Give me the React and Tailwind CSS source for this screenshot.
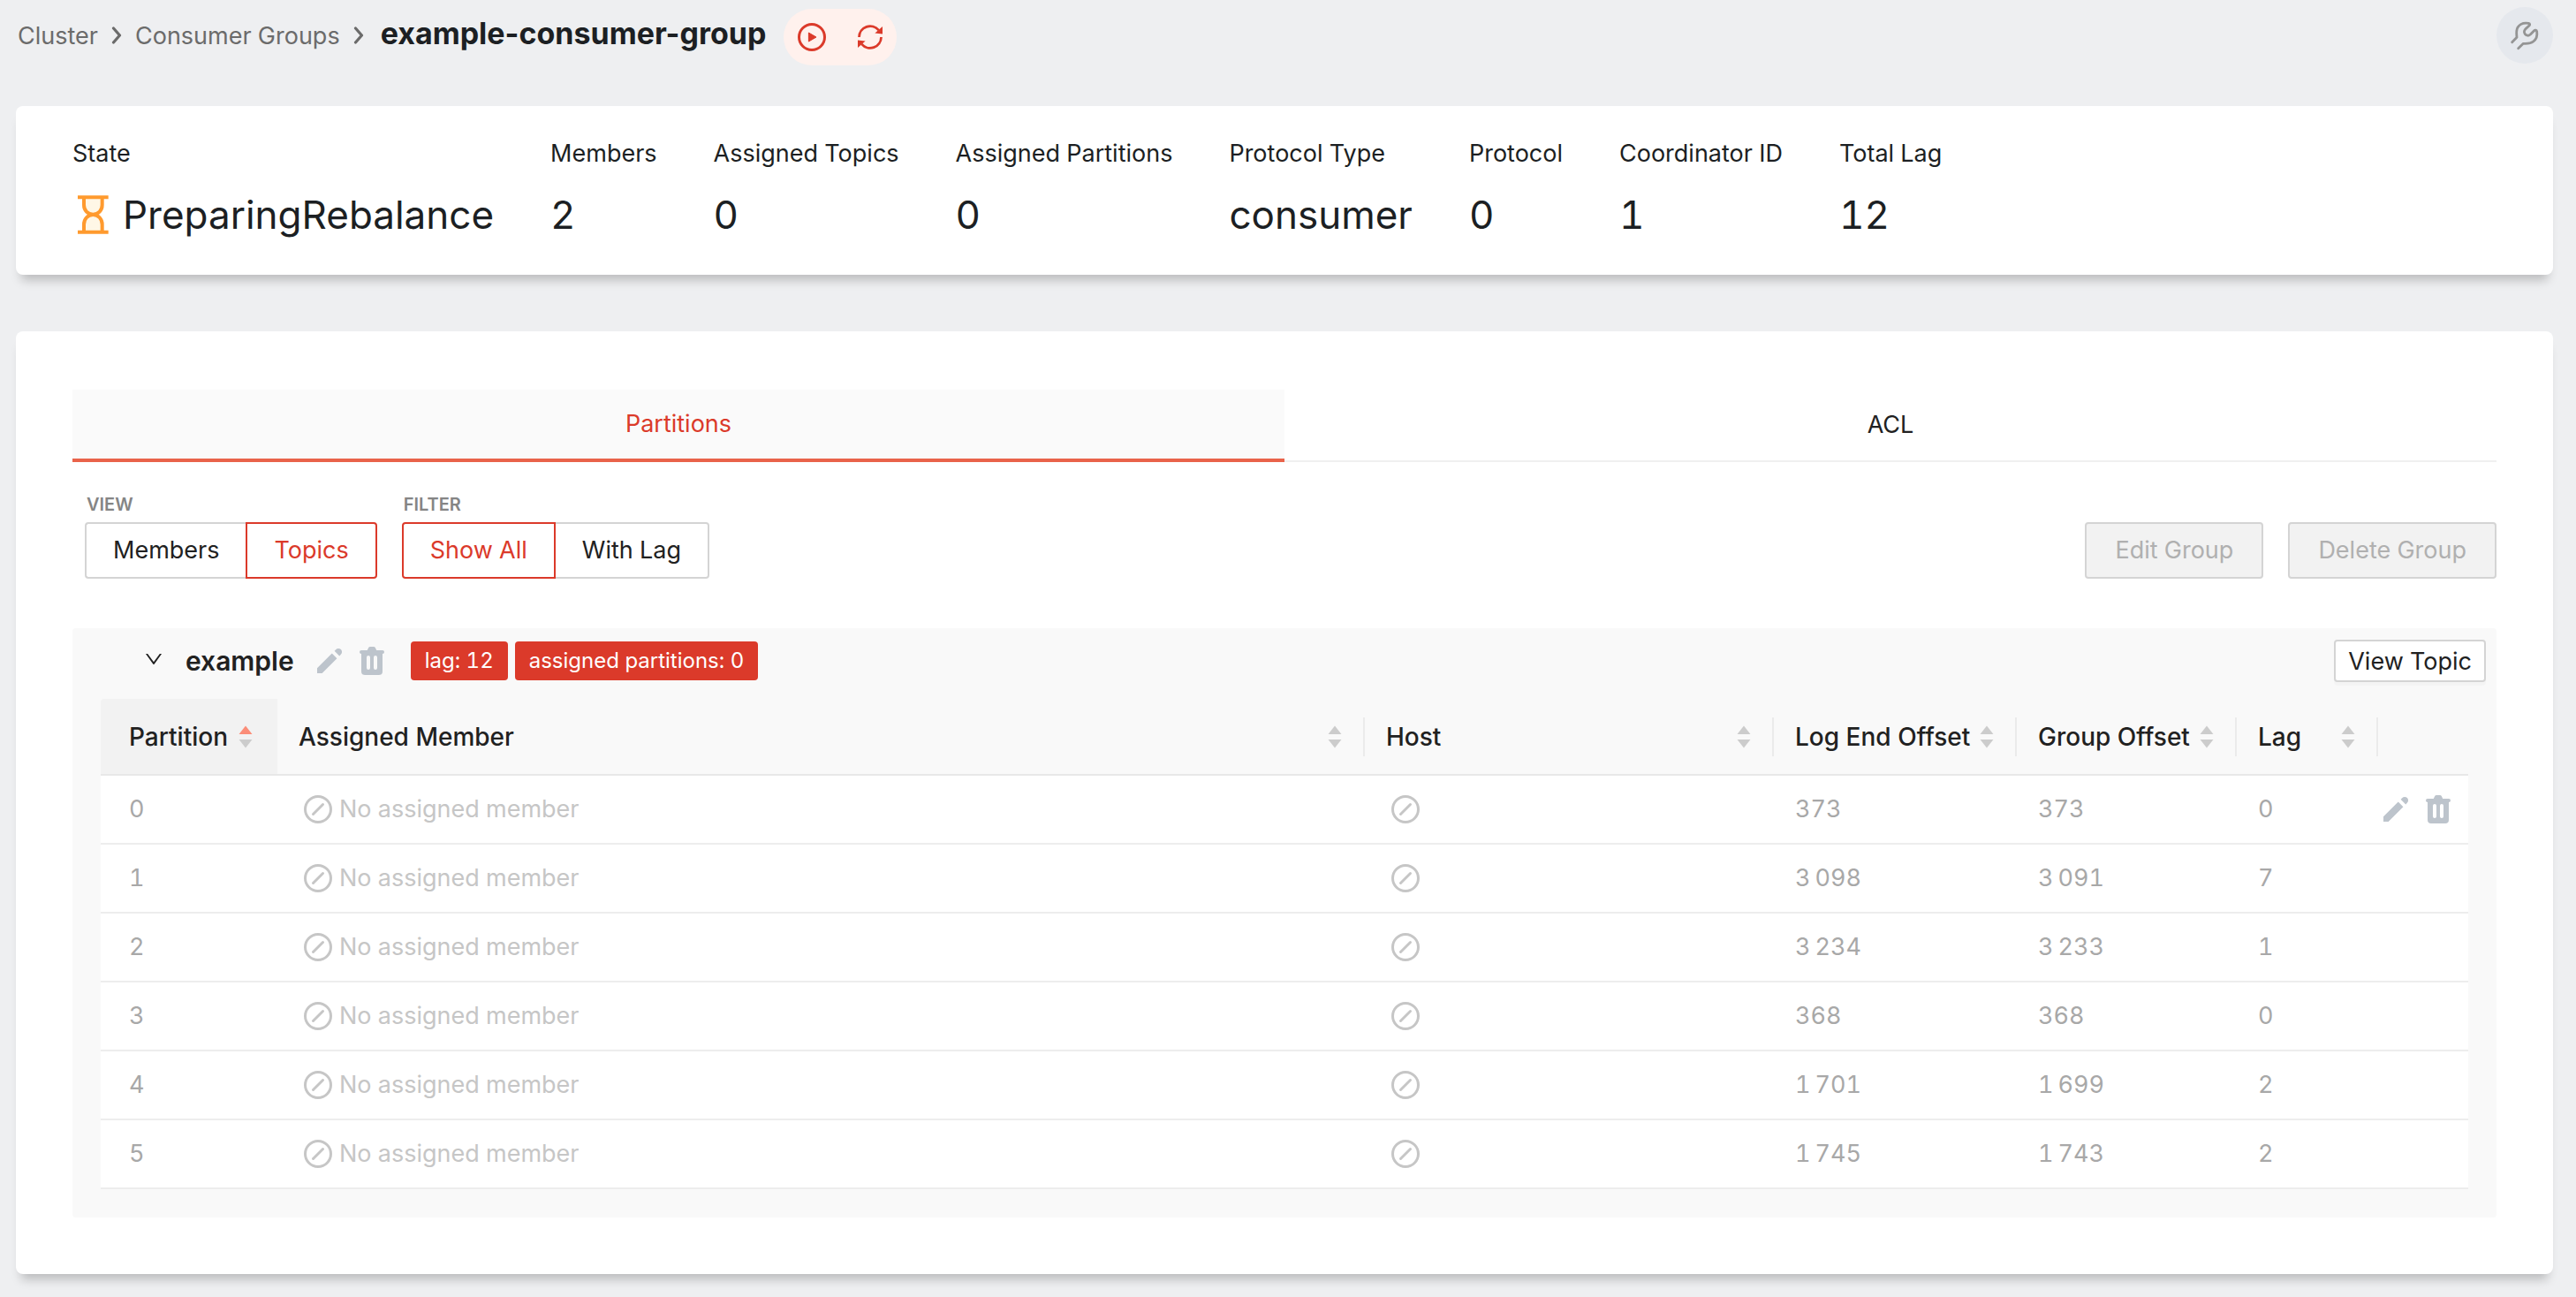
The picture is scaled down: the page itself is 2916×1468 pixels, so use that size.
import React from "react";
import { HiPencil, HiTrash } from "react-icons/hi";
import { AiOutlineDown } from "react-icons/ai";

const stats = [
  ["Members", "2"],
  ["Assigned Topics", "0"],
  ["Assigned Partitions", "0"],
  ["Protocol Type", "consumer"],
  ["Protocol", "0"],
  ["Coordinator ID", "1"],
  ["Total Lag", "12"],
];

const rows = [
  ["0", "373", "373", "0"],
  ["1", "3\u2009098", "3\u2009091", "7"],
  ["2", "3\u2009234", "3\u2009233", "1"],
  ["3", "368", "368", "0"],
  ["4", "1\u2009701", "1\u2009699", "2"],
  ["5", "1\u2009745", "1\u2009743", "2"],
];

function ChevronIcon() {
  return (
    <svg viewBox="0 0 12 20" className="mx-[15px] h-5 w-3 shrink-0" fill="none" stroke="currentColor" strokeWidth="3.2" strokeLinecap="round" strokeLinejoin="round" aria-hidden="true">
      <path d="M2.5 2 L9.5 10 L2.5 18" />
    </svg>
  );
}

function PlayIcon() {
  return (
    <svg viewBox="0 0 32 32" className="size-8" aria-hidden="true">
      <circle cx="16" cy="16" r="14.5" fill="none" stroke="currentColor" strokeWidth="3" />
      <path d="M12.4 11 V21 L21 16 Z" fill="currentColor" stroke="currentColor" strokeWidth="1" strokeLinejoin="round" />
    </svg>
  );
}

function RefreshIcon() {
  return (
    <svg viewBox="0 0 28 28" className="size-7" aria-hidden="true">
      <g fill="none" stroke="currentColor" strokeWidth="2.8">
        <path d="M1.5 14 A12.5 12.5 0 0 1 23.6 6.2" />
        <path d="M26.5 14 A12.5 12.5 0 0 1 4.4 21.8" />
      </g>
      <path d="M28 2 V10.4 L19.4 9.6 Z" fill="currentColor" />
      <path d="M0 26 V17.6 L8.6 18.4 Z" fill="currentColor" />
    </svg>
  );
}

function WrenchIcon() {
  return (
    <svg viewBox="78 66 102 102" className="size-[34px]" fill="none" stroke="currentColor" strokeWidth="8.5" strokeLinecap="round" strokeLinejoin="round" aria-hidden="true">
      <path d="M86 140 L102 124 C101 114 99 100 105 90 C113 77 129 74 142 76 C147 77 147 81 144 84 L133 94 C126 101 126 108 130 113 C135 119 142 119 148 114 L160 102 C164 98 169 99 170 104 C172 116 168 130 158 138 C149 145 137 146 124 145 L107 161" />
    </svg>
  );
}

function HourglassIcon() {
  return (
    <svg viewBox="50 54 117 138" className="mr-[14px] h-[46px] w-[39px] shrink-0" fill="none" stroke="#ff9a2e" strokeWidth="12" aria-hidden="true">
      <path d="M77 64 V90 C77 108 90 122 108 122 C126 122 139 108 139 90 V64" fill="#fff7e6" />
      <path d="M77 182 V156 C77 138 90 123 108 123 C126 123 139 138 139 156 V182" fill="#fff7e6" />
      <path d="M56 64 H160 M56 182 H160" />
    </svg>
  );
}

function SkipIcon({ label }) {
  return (
    <svg viewBox="0 0 32 32" className="size-8 shrink-0" fill="none" stroke="currentColor" strokeWidth="3" strokeLinecap="round" role={label ? "img" : undefined} aria-label={label} aria-hidden={label ? undefined : true}>
      <circle cx="16" cy="16" r="14.5" />
      <path d="M10.5 21.5 L21.5 10.5" />
    </svg>
  );
}

function Sorter({ active }) {
  return (
    <svg viewBox="0 0 16 28" className="h-7 w-4 shrink-0" aria-hidden="true">
      <path d="M8 1.5 L15.5 11 H0.5 Z" fill={active ? "#fb8d78" : "#cccccc"} />
      <path d="M8 26.5 L15.5 17 H0.5 Z" fill="#cccccc" />
    </svg>
  );
}

function Head({ title, active }) {
  return (
    <th scope="col" className={active ? "rounded-tl bg-[#f2f2f2] p-0" : "p-0"}>
      <div className={active ? "flex h-11 items-center" : "flex h-11 items-center border-r-2 border-[#ebebeb]"}>
        <button type="button" className={"flex flex-1 items-center justify-between text-left font-medium whitespace-nowrap " + (active ? "pr-7 pl-8" : "px-6")}>
          {title}
          <Sorter active={active} />
        </button>
      </div>
    </th>
  );
}

function Actions() {
  return (
    <span className="flex items-center gap-2 text-[#bdc4cc]">
      <button type="button" aria-label="Edit"><HiPencil className="size-10" /></button>
      <button type="button" aria-label="Delete"><HiTrash className="size-10" /></button>
    </span>
  );
}

export default function App() {
  return (
    <div className="min-h-screen bg-[#eeeff1] pr-[26px] pb-[26px] pl-[18px] font-['Inter',sans-serif] text-[27px] leading-[44px] text-[#212121] tabular-nums">
      <header className="flex h-[120px] items-start justify-between pt-2">
        <div className="flex items-start">
          <nav aria-label="Breadcrumb" className="mt-2 flex items-baseline text-[#6b6b6b]">
            <a href="#" className="pl-[2px]">Cluster</a>
            <ChevronIcon />
            <a href="#">Consumer Groups</a>
            <ChevronIcon />
            <h1 className="ml-1 text-[34px] font-bold text-[#1c1f23] normal-nums">example-consumer-group</h1>
          </nav>
          <div className="mt-0.5 ml-5 flex h-16 w-32 items-center justify-between rounded-full bg-[#fff1ed] px-4 text-[#db3a2a]">
            <button type="button" aria-label="Play"><PlayIcon /></button>
            <button type="button" aria-label="Refresh"><RefreshIcon /></button>
          </div>
        </div>
        <button type="button" aria-label="Debug" className="flex size-16 items-center justify-center rounded-full bg-[#e5e8ed] text-[#949494]">
          <WrenchIcon />
        </button>
      </header>

      <main className="flex flex-col gap-16">
        <section className="rounded-lg bg-white px-16 pt-8 pb-[22px] shadow-[0_12px_12px_-6px_#00000038]">
          <dl className="flex gap-16 text-[#1c1f23]">
            <div>
              <dt>State</dt>
              <dd className="flex h-[93px] items-center pl-1 text-[44px]">
                <HourglassIcon />
                PreparingRebalance
              </dd>
            </div>
            {stats.map(([label, value]) => (
              <div key={label}>
                <dt>{label}</dt>
                <dd className="flex h-[93px] items-center text-[44px]">{value}</dd>
              </div>
            ))}
          </dl>
        </section>

        <section className="rounded-lg bg-white px-16 pt-[66px] pb-16 shadow-[0_12px_12px_-6px_#00000038]">
          <div role="tablist" className="grid grid-cols-2">
            <button type="button" role="tab" aria-selected="true" className="h-[82px] border-b-4 border-[#e9634a] bg-[#fafafa] text-[#db3a2a]">Partitions</button>
            <button type="button" role="tab" aria-selected="false" className="h-[82px] border-b-2 border-[#f0f0f0]">ACL</button>
          </div>

          <div className="mt-8 flex items-end justify-between pl-[14px]">
            <div className="flex gap-7">
              <div role="group" aria-labelledby="view-label">
                <div id="view-label" className="pl-[2px] text-[20px] leading-[32px] font-semibold text-[#858585]">VIEW</div>
                <div className="mt-1 flex h-16">
                  <button type="button" className="rounded-l border-2 border-r-0 border-[#d4d4d4] px-[30px]">Members</button>
                  <button type="button" className="rounded-r border-2 border-[#db3a2a] px-[30px] text-[#db3a2a]">Topics</button>
                </div>
              </div>
              <div role="group" aria-labelledby="filter-label">
                <div id="filter-label" className="pl-[2px] text-[20px] leading-[32px] font-semibold text-[#858585]">FILTER</div>
                <div className="mt-1 flex h-16">
                  <button type="button" className="rounded-l border-2 border-[#db3a2a] px-[30px] text-[#db3a2a]">Show All</button>
                  <button type="button" className="rounded-r border-2 border-l-0 border-[#d4d4d4] px-[30px]">With Lag</button>
                </div>
              </div>
            </div>
            <div className="flex gap-7 text-[#b0b0b0]">
              <button type="button" disabled className="h-16 rounded border-2 border-[#d4d4d4] bg-[#f2f2f2] px-8">Edit Group</button>
              <button type="button" disabled className="h-16 rounded border-2 border-[#d4d4d4] bg-[#f2f2f2] px-8">Delete Group</button>
            </div>
          </div>

          <div className="mt-14 rounded bg-[#f9f9f9] pb-8">
            <div className="flex h-20 items-center pr-3 pb-1.5 pl-20">
              <button type="button" aria-label="Collapse" className="pb-1"><AiOutlineDown className="size-6" /></button>
              <span className="mr-5 ml-6 text-[30px] font-semibold">example</span>
              <Actions />
              <span className="ml-6 rounded bg-[#db3a2a] px-4 text-[24px] text-white">lag: 12</span>
              <span className="ml-2 rounded bg-[#db3a2a] px-4 text-[24px] text-white">assigned partitions: 0</span>
              <button type="button" className="ml-auto h-12 rounded border-2 border-[#d4d4d4] bg-white px-[14px] leading-none shadow-[0_4px_0_#00000005]">View Topic</button>
            </div>
            <div className="px-8">
              <table className="w-full table-fixed border-collapse">
                <colgroup>
                  <col className="w-[200px]" />
                  <col />
                  <col className="w-[463px]" />
                  <col className="w-[275px]" />
                  <col className="w-[249px]" />
                  <col className="w-[160px]" />
                  <col className="w-[102px]" />
                </colgroup>
                <thead className="text-[28px]">
                  <tr className="h-[86px] border-b-2 border-[#e8e8e8] text-left">
                    <Head title="Partition" active />
                    <Head title="Assigned Member" />
                    <Head title="Host" />
                    <Head title="Log End Offset" />
                    <Head title="Group Offset" />
                    <Head title="Lag" />
                    <td />
                  </tr>
                </thead>
                <tbody className="bg-white text-[#a8a8a8]">
                  {rows.map(([partition, end, group, lag], i) => (
                    <tr key={partition} className="h-[78px] border-b-2 border-[#ededed]">
                      <td className="pl-8">{partition}</td>
                      <td className="pl-[30px] text-[#c6c6c6]">
                        <span className="flex items-center gap-2"><SkipIcon />No assigned member</span>
                      </td>
                      <td className="pl-[30px] text-[#c6c6c6]"><SkipIcon label="No host" /></td>
                      <td className="pl-6">{end}</td>
                      <td className="pl-6">{group}</td>
                      <td className="pl-6">{lag}</td>
                      <td>{i === 0 && <Actions />}</td>
                    </tr>
                  ))}
                </tbody>
              </table>
            </div>
          </div>
        </section>
      </main>
    </div>
  );
}
